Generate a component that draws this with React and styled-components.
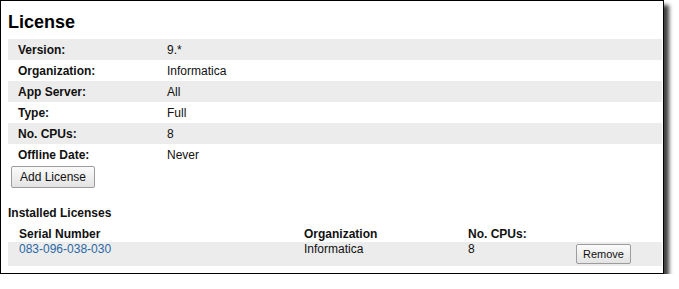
import React from "react";
import styled, { createGlobalStyle } from "styled-components";

const Global = createGlobalStyle`
  html, body { margin: 0; padding: 0; background: #fff; }
  body { font-family: "Liberation Sans", Arial, sans-serif; color: #111; }
`;

const Frame = styled.div`
  box-sizing: border-box;
  width: 664px;
  height: 274px;
  border: 1px solid #000;
  background: #fff;
  box-shadow: 5px 5px 4px rgba(0, 0, 0, 0.75);
  padding: 0 1px 0 7px;
  display: flex;
  flex-direction: column;
`;

const Title = styled.h1`
  margin: 0;
  padding-top: 10px;
  height: 38px;
  box-sizing: border-box;
  font-size: 18px;
  line-height: 22px;
  font-weight: bold;
  color: #000;
`;

const PropTable = styled.div`
  display: flex;
  flex-direction: column;
`;

const PropRow = styled.div`
  display: grid;
  grid-template-columns: 149px 1fr;
  height: 21px;
  align-items: center;
  padding-left: 10px;
  font-size: 12px;
  background: ${(p) => (p.$shaded ? "#ececec" : "#fff")};
`;

const Label = styled.span`
  font-weight: bold;
  color: #111;
`;

const Value = styled.span`
  color: #111;
`;

const Button = styled.button`
  font-family: "Liberation Sans", Arial, sans-serif;
  font-size: ${(p) => p.$size || 12}px;
  color: #111;
  background: linear-gradient(#fbfbfb, #e3e3e3);
  border: 1px solid #9c9c9c;
  border-radius: 2px;
  padding: 0;
  width: ${(p) => p.$w}px;
  height: ${(p) => p.$h}px;
  cursor: pointer;
`;

const AddWrap = styled.div`
  padding: 1px 0 0 3px;
`;

const Section = styled.div`
  margin-top: 18px;
  font-size: 12px;
  font-weight: bold;
  line-height: 14px;
  color: #111;
`;

const ListGrid = styled.div`
  display: grid;
  grid-template-columns: 285px 164px 108px 1fr;
  padding-left: 11px;
  font-size: 12px;
  align-items: start;
  margin-top: ${(p) => p.$top || 0}px;
  background: ${(p) => (p.$shaded ? "#ececec" : "transparent")};
  height: ${(p) => p.$h}px;
  line-height: ${(p) => p.$lh}px;
  font-weight: ${(p) => (p.$bold ? "bold" : "normal")};
`;

const Link = styled.a`
  color: #2a68a6;
  text-decoration: none;
`;

const ButtonCell = styled.div`
  padding-top: 2px;
`;

export default function App() {
  const props = [
    ["Version:", "9.*"],
    ["Organization:", "Informatica"],
    ["App Server:", "All"],
    ["Type:", "Full"],
    ["No. CPUs:", "8"],
    ["Offline Date:", "Never"],
  ];
  return (
    <>
      <Global />
      <Frame>
        <Title>License</Title>
        <PropTable>
          {props.map(([k, v], i) => (
            <PropRow key={k} $shaded={i % 2 === 0}>
              <Label>{k}</Label>
              <Value>{v}</Value>
            </PropRow>
          ))}
        </PropTable>
        <AddWrap>
          <Button $w={84} $h={22}>Add License</Button>
        </AddWrap>
        <Section>Installed Licenses</Section>
        <ListGrid $top={7} $h={15} $lh={15} $bold>
          <span>Serial Number</span>
          <span>Organization</span>
          <span>No. CPUs:</span>
          <span />
        </ListGrid>
        <ListGrid $shaded $h={24} $lh={14}>
          <Link href="#">083-096-038-030</Link>
          <span>Informatica</span>
          <span>8</span>
          <ButtonCell>
            <Button $w={55} $h={20} $size={11}>Remove</Button>
          </ButtonCell>
        </ListGrid>
      </Frame>
    </>
  );
}
